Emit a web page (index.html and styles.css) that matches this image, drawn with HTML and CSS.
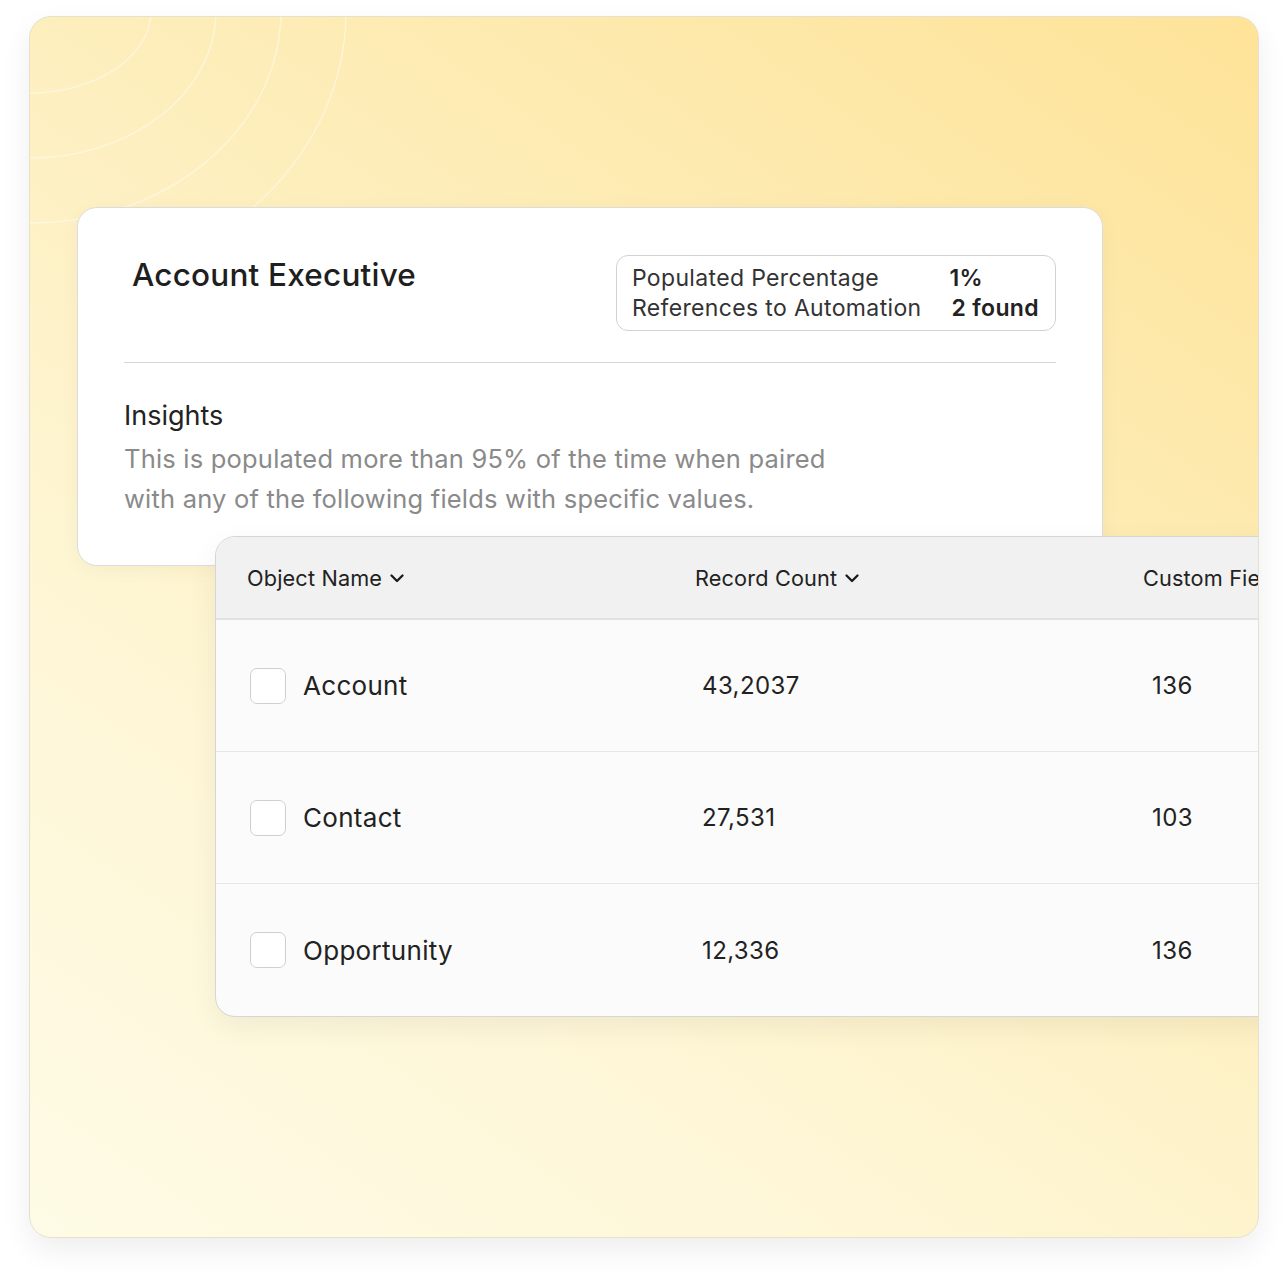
FILE: index.html
```html
<!DOCTYPE html>
<html lang="en">
<head>
    <meta charset="UTF-8">
    <meta name="viewport" content="width=device-width, initial-scale=1.0">
    <title>Account Executive</title>
    <link rel="stylesheet" href="styles.css">
</head>
<body>
    <div class="frame">
        <svg class="rings" width="400" height="260" viewBox="0 0 400 260">
            <ellipse cx="0" cy="-6" rx="121" ry="82" />
            <ellipse cx="0" cy="-6" rx="186" ry="147" />
            <ellipse cx="0" cy="-6" rx="251" ry="212" />
            <ellipse cx="0" cy="-6" rx="316" ry="277" />
        </svg>

        <div class="field-card">
            <div class="field-head">
                <h1 class="field-title">Account Executive</h1>
                <div class="stats">
                    <span>Populated Percentage</span>
                    <b>1%</b>
                    <span>References to Automation</span>
                    <b class="found">2 found</b>
                </div>
            </div>
            <hr class="divider">
            <h2 class="insights-title">Insights</h2>
            <p class="insights-text">This is populated more than 95% of the time when paired<br>with any of the following fields with specific values.</p>
        </div>

        <div class="object-table">
            <div class="table-head">
                <div class="th">Object Name
                    <svg class="chev" width="16" height="16" viewBox="0 0 16 16"><path d="M2.5 5.5 L8 11 L13.5 5.5" /></svg>
                </div>
                <div class="th">Record Count
                    <svg class="chev" width="16" height="16" viewBox="0 0 16 16"><path d="M2.5 5.5 L8 11 L13.5 5.5" /></svg>
                </div>
                <div class="th">Custom Fields</div>
            </div>
            <div class="table-row">
                <div class="td name"><span class="checkbox"></span>Account</div>
                <div class="td num">43,2037</div>
                <div class="td num alt">136</div>
            </div>
            <div class="table-row">
                <div class="td name"><span class="checkbox"></span>Contact</div>
                <div class="td num">27,531</div>
                <div class="td num alt">103</div>
            </div>
            <div class="table-row last">
                <div class="td name"><span class="checkbox"></span>Opportunity</div>
                <div class="td num">12,336</div>
                <div class="td num alt">136</div>
            </div>
        </div>
    </div>
</body>
</html>
```

FILE: styles.css
```css
* {
    box-sizing: border-box;
}

:root {
    --text-color: #1f1f1f;
    --muted-color: #8a8a8a;
    --line-color: #d9d9d9;
}

body {
    margin: 0;
    padding: 16px 29px 42px;
    background: #fff;
    font-family: 'Inter', 'Noto Sans', sans-serif;
    color: var(--text-color);
}

/* Outer yellow panel */
.frame {
    position: relative;
    width: 1230px;
    height: 1222px;
    border: 1px solid #e6e1cc;
    border-radius: 22px;
    overflow: hidden;
    background: linear-gradient(215deg, #fee398 0%, #fdeebc 40%, #fef6d6 70%, #fefbe6 100%);
    box-shadow: 0 12px 30px rgba(0, 0, 0, 0.07);
    padding-top: 190px;
}

.rings {
    position: absolute;
    left: 0;
    top: 0;
}

.rings ellipse {
    fill: none;
    stroke: #fff;
    stroke-width: 1.5;
    opacity: 0.45;
}

/* Field card */
.field-card {
    position: relative;
    width: 1026px;
    margin-left: 47px;
    padding: 47px 46px 46px;
    background: #fff;
    border: 1px solid #dcdcdc;
    border-radius: 20px;
    box-shadow: 0 4px 20px rgba(0, 0, 0, 0.04);
}

.field-head {
    display: flex;
    justify-content: space-between;
    align-items: flex-start;
}

.field-title {
    margin: 0 0 0 8px;
    font-size: 31.5px;
    font-weight: 500;
    line-height: 40px;
    letter-spacing: 0.2px;
}

.stats {
    display: grid;
    grid-template-columns: auto auto;
    column-gap: 28px;
    padding: 7px 16px 7px 15px;
    border: 1px solid #d2d2d2;
    border-radius: 12px;
    font-size: 23px;
    line-height: 30px;
    color: #333;
    letter-spacing: 0.35px;
}

.stats b {
    font-weight: 600;
    color: #222;
}

.stats .found {
    padding-left: 2px;
}

.divider {
    margin: 31px 0 0;
    border: none;
    border-top: 1.5px solid #d6d6d6;
}

.insights-title {
    margin: 33px 0 0;
    font-size: 27px;
    font-weight: 400;
    line-height: 40px;
    color: #222;
}

.insights-text {
    margin: 3px 0 0;
    font-size: 25.5px;
    line-height: 40px;
    color: var(--muted-color);
    letter-spacing: 0.2px;
}

/* Objects table */
.object-table {
    position: relative;
    width: 1220px;
    margin: -30px 0 0 185px;
    background: #fbfbfb;
    border: 1.5px solid #d6d6d6;
    border-radius: 20px;
    overflow: hidden;
    box-shadow: 0 10px 30px rgba(0, 0, 0, 0.06);
}

.table-head,
.table-row {
    display: grid;
    grid-template-columns: 448px 448px 1fr;
    align-items: center;
    padding-left: 31px;
}

.table-head {
    height: 83px;
    background: #f1f1f1;
    border-bottom: 2px solid #e2e2e2;
}

.th {
    display: flex;
    align-items: center;
    gap: 7px;
    font-size: 21.7px;
    color: #222;
    letter-spacing: 0.15px;
}

.chev {
    fill: none;
    stroke: #1a1a1a;
    stroke-width: 2.3;
    stroke-linecap: round;
    stroke-linejoin: round;
}

.table-row {
    height: 132px;
    border-bottom: 1.5px solid #e6e6e6;
}

.table-row.last {
    border-bottom: none;
}

.td {
    font-size: 24px;
    color: #222;
}

.td.name {
    display: flex;
    align-items: center;
    gap: 17px;
    padding-left: 3px;
    font-size: 26px;
    letter-spacing: 0.3px;
}

.td.num {
    padding-left: 7px;
    letter-spacing: 0.4px;
}

.td.num.alt {
    padding-left: 9px;
}

.checkbox {
    width: 36px;
    height: 36px;
    border: 1.5px solid #cfcfcf;
    border-radius: 7px;
    background: #fff;
}
```
